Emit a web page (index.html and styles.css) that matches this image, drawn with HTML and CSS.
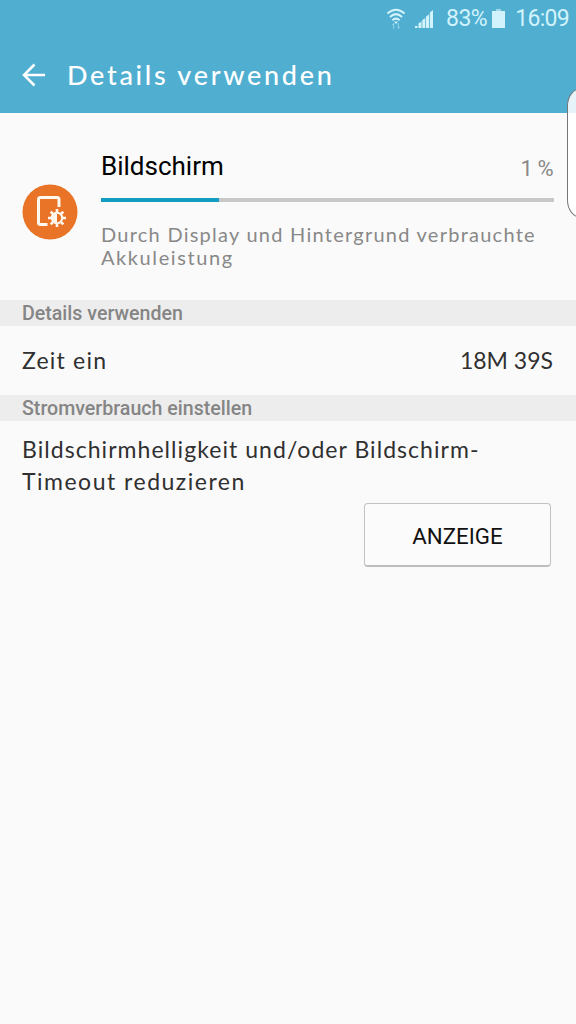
FILE: index.html
```html
<!DOCTYPE html>
<html lang="de">
<head>
<meta charset="utf-8">
<title>Details verwenden</title>
<link rel="stylesheet" href="styles.css">
</head>
<body>
<header class="header">
  <div class="status">
    <svg class="wifi" width="20" height="22" viewBox="0 0 22 22" preserveAspectRatio="none">
      <g fill="none" stroke="currentColor" stroke-width="2">
        <path d="M1.500 5.500Q11-2 20.500 5.500M4.300 9Q11 3.300 17.700 9M7 12.300Q11 8.900 15 12.300"/>
      </g>
      <path d="M8.800 13.500H13.200L11 16Z" fill="currentColor"/>
      <path d="M8.500 21V15.500M6.500 17.500L8.500 15.500M13.500 15V20.500M13.500 20.500L15.500 18.500" fill="none" stroke="currentColor" opacity=".6"/>
    </svg>
    <svg class="signal" width="20" height="20" viewBox="0 0 20 20" fill="currentColor">
      <path d="M1 17H3.500V19H1ZM4.500 14.500L7.500 12.500V19H4.500ZM8.300 11L11.300 9V19H8.300ZM12 7.500L15 5.500V19H12ZM15.800 3.500L19 1V19H15.800Z"/>
    </svg>
    <span class="percent">83%</span>
    <svg class="battery" width="13" height="19" viewBox="0 0 13 19">
      <path d="M4 0H9V2H4Z" fill="currentColor" opacity=".6"/>
      <path d="M0 2H13V19H0Z" fill="currentColor"/>
    </svg>
    <span class="clock">16:09</span>
  </div>
  <div class="titlebar">
    <svg class="back" width="24" height="24" viewBox="0 0 24 24" fill="none" stroke="currentColor" stroke-width="2.500">
      <path d="M12.500 1.500L2 12L12.500 22.500M2 12H23"/>
    </svg>
    <h1 class="title">Details verwenden</h1>
  </div>
</header>
<div class="edge-handle"></div>
<main>
  <section class="usage">
    <svg class="app-icon" width="56" height="56" viewBox="0 0 56 56">
      <circle cx="28" cy="28" r="27.500" fill="#e97428"/>
      <path d="M37 23V15.500Q37 13.500 35 13.500H18.500Q16.500 13.500 16.500 15.500V38.500Q16.500 40.500 18.500 40.500H25.500" fill="none" stroke="#fff8ee" stroke-width="3"/>
      <g transform="translate(35 34)">
        <circle r="5.200" fill="none" stroke="#fff8ee" stroke-width="2"/>
        <path d="M0-4.500A4.500 4.500 0 0 0 0 4.500Z" fill="#fff8ee"/>
        <path d="M0-9V-5M0 5V9M-9 0H-5M5 0H9M-6.300-6.300L-4-4M6.300 6.300L4 4M-6.300 6.300L-4 4M6.300-6.300L4-4" stroke="#fff8ee" stroke-width="2.600"/>
      </g>
    </svg>
    <div class="usage-body">
      <div class="usage-head"><span class="name">Bildschirm</span><span class="share">1 %</span></div>
      <div class="bar"><div class="bar-fill"></div></div>
      <p class="summary">Durch Display und Hintergrund verbrauchte<br><span class="summary-end">Akkuleistung</span></p>
    </div>
  </section>
  <h2 class="section">Details verwenden</h2>
  <div class="row"><span class="label">Zeit ein</span><span class="value">18M 39S</span></div>
  <h2 class="section">Stromverbrauch einstellen</h2>
  <p class="advice">Bildschirmhelligkeit und/oder Bildschirm-<br><span class="advice-end">Timeout reduzieren</span></p>
  <div class="actions"><button class="button">ANZEIGE</button></div>
</main>
</body>
</html>
```

FILE: styles.css
```css
* { box-sizing: border-box; }
body {
  margin: 0;
  width: 576px;
  height: 1024px;
  overflow: hidden;
  position: relative;
  background: #fafafa;
  font-family: Roboto, sans-serif;
  color: #303030;
}
h1, h2, p { margin: 0; font-weight: 400; }
.header { height: 113px; background: #50aed0; color: #fff; }
.status {
  height: 37px;
  padding-right: 8px;
  display: flex;
  align-items: center;
  justify-content: flex-end;
  color: #d2f3fc;
  font-size: 23px;
}
.wifi { margin: 0 8px 0 0; }
.signal { margin-right: 12px; }
.percent { letter-spacing: -.5px; margin-right: 5px; }
.battery { margin-right: 10px; }
.clock { letter-spacing: -.7px; margin-right: -1px; }
.titlebar { height: 75px; display: flex; align-items: center; padding-left: 22px; }
.title {
  margin-left: 21px;
  font: 500 27px/32px Lato, sans-serif;
  letter-spacing: 2.700px;
  white-space: nowrap;
}
.edge-handle {
  position: absolute;
  left: 567px;
  top: 88px;
  width: 30px;
  height: 130px;
  border: 1px solid #73777a;
  border-radius: 14px / 18px;
  background: rgba(255, 255, 255, .86);
}
.usage { height: 187px; display: flex; padding: 37px 22px 0 22px; }
.app-icon { margin: 34px 23px 0 0; flex: none; }
.usage-body { flex: 1; }
.usage-head { height: 48px; display: flex; justify-content: space-between; line-height: 33px; }
.name { color: #000; font-size: 26px; }
.share { color: #888; font-size: 22px; line-height: 37px; letter-spacing: -.500px; padding-right: 1px; }
.bar { height: 4px; background: #c8c8c8; }
.bar-fill { width: 118px; height: 4px; background: #149bc2; }
.summary {
  margin-top: 21px;
  font: 20px/23px Lato, sans-serif;
  letter-spacing: 1.250px;
  color: #888;
  white-space: nowrap;
}
.summary-end { letter-spacing: 1.600px; }
.section {
  height: 26px;
  padding-left: 22px;
  background: #ededed;
  color: #858585;
  font-size: 19.600px;
  line-height: 28px;
  font-weight: 500;
}
.row {
  height: 69px;
  display: flex;
  justify-content: space-between;
  padding: 0 23px 0 22px;
  font: 23px/69px Lato, sans-serif;
}
.label { letter-spacing: 1.200px; }
.advice {
  height: 82px;
  padding: 12px 0 0 22px;
  font: 23px/32px Lato, sans-serif;
  letter-spacing: 1.050px;
  white-space: nowrap;
}
.advice-end { letter-spacing: 1.500px; }
.actions { display: flex; justify-content: flex-end; padding-right: 25px; }
.button {
  width: 187px;
  height: 64px;
  border: 1px solid #c2c2c2;
  border-bottom: 2px solid #bdbdbd;
  border-radius: 4px;
  background: #fbfbfb;
  color: #111;
  font: 22.300px Roboto, sans-serif;
  padding: 3px 0 0;
}
```
